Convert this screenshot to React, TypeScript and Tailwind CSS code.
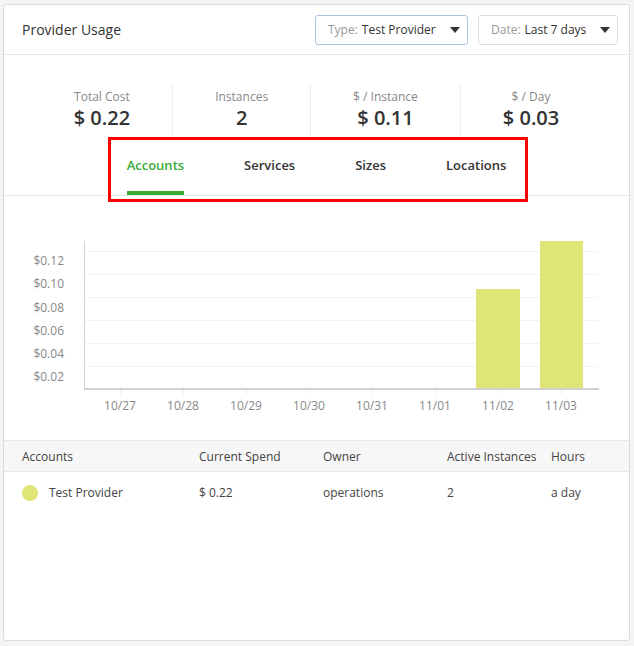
import React from "react";

const stats = [
  { label: "Total Cost", value: "$ 0.22" },
  { label: "Instances", value: "2" },
  { label: "$ / Instance", value: "$ 0.11" },
  { label: "$ / Day", value: "$ 0.03" },
];

const tabs = ["Accounts", "Services", "Sizes", "Locations"];

const yLabels = [
  { t: "$0.12", y: 64 },
  { t: "$0.10", y: 87 },
  { t: "$0.08", y: 111 },
  { t: "$0.06", y: 134 },
  { t: "$0.04", y: 157 },
  { t: "$0.02", y: 180 },
];
const grid = [55, 78, 101, 124, 147, 170];
const xLabels = ["10/27", "10/28", "10/29", "10/30", "10/31", "11/01", "11/02", "11/03"];

function Caret() {
  return (
    <svg width="10" height="6" viewBox="0 0 10 6" className="ml-[14px]">
      <path d="M0 0 L10 0 L5 6 Z" fill="#333" />
    </svg>
  );
}

function Chart() {
  const ox = 80;
  return (
    <svg width="625" height="244" className="block">
      {grid.map((g) => (
        <line key={g} x1={ox} x2={594} y1={g + 0.5} y2={g + 0.5} stroke="#f2f2f2" strokeWidth="1" />
      ))}
      <line x1={ox + 0.5} x2={ox + 0.5} y1={45} y2={193} stroke="#d4d4d4" strokeWidth="1" />
      {xLabels.map((_, i) => (
        <line key={i} x1={116 + i * 63 + 0.5} x2={116 + i * 63 + 0.5} y1={194} y2={198} stroke="#ececec" strokeWidth="1" />
      ))}
      <rect x={472} y={93} width={44} height={99} fill="#dfe576" />
      <rect x={536} y={45} width={43} height={147} fill="#dfe576" />
      <rect x={ox} y={192} width={515} height={2} fill="#d0d0d0" />
      {yLabels.map((l) => (
        <text
          key={l.t}
          x={60}
          y={l.y}
          textAnchor="end"
          dominantBaseline="central"
          fontFamily="'Open Sans', sans-serif"
          fontSize="12"
          fill="#888"
        >
          {l.t}
        </text>
      ))}
      {xLabels.map((l, i) => (
        <text
          key={l}
          x={116 + i * 63}
          y={209}
          textAnchor="middle"
          dominantBaseline="central"
          fontFamily="'Open Sans', sans-serif"
          fontSize="12"
          fill="#888"
        >
          {l}
        </text>
      ))}
    </svg>
  );
}

export default function App() {
  return (
    <div className="min-h-[646px] bg-[#f4f4f4] pl-[3px] pt-[4px]" style={{ fontFamily: "'Open Sans', sans-serif" }}>
      <div className="relative h-[637px] w-[627px] rounded-[3px] border border-[#dcdcdc] bg-white">
        {/* header */}
        <div className="flex h-[50px] items-center justify-between border-b border-[#e8e8e8] pl-[18px] pr-[11px]">
          <div className="text-[14px] text-[#333]">Provider Usage</div>
          <div className="flex gap-[10px]">
            <div className="flex h-[30px] w-[153px] items-center rounded-[3px] border border-[#a9c6e6] pl-[12px] text-[12px]">
              <span className="text-[#999]">Type:</span>
              <span className="ml-[4px] text-[#333]">Test Provider</span>
              <Caret />
            </div>
            <div className="flex h-[30px] w-[140px] items-center rounded-[3px] border border-[#dcdcdc] pl-[12px] text-[12px]">
              <span className="text-[#999]">Date:</span>
              <span className="ml-[4px] text-[#333]">Last 7 days</span>
              <Caret />
            </div>
          </div>
        </div>

        {/* stats */}
        <div className="flex justify-center pt-[30px]">
          {stats.map((s, i) => (
            <div
              key={s.label}
              className={
                "flex h-[50px] flex-col items-center px-[42px] " + (i > 0 ? "border-l border-[#ececec]" : "")
              }
            >
              <div className="mt-[3px] text-[12px] leading-[18px] text-[#888]">{s.label}</div>
              <div className="mt-[-1px] text-[20px] font-semibold leading-[26px] text-[#333]">{s.value}</div>
            </div>
          ))}
        </div>

        {/* tabs */}
        <div className="flex justify-center gap-[60px] border-b border-[#e8e8e8]">
          {tabs.map((t, i) => (
            <div key={t} className="flex flex-col">
              <div
                className={
                  "pt-[21px] pb-[17px] text-[13px] font-semibold leading-[18px] " +
                  (i === 0 ? "text-[#3aaa35]" : "text-[#333]")
                }
              >
                {t}
              </div>
              <div className={"h-[4px] " + (i === 0 ? "bg-[#3aaa35]" : "")} />
            </div>
          ))}
        </div>

        {/* chart */}
        <Chart />

        {/* table */}
        <div className="grid h-[32px] grid-cols-[177px_124px_124px_104px_1fr] items-center border-y border-[#e8e8e8] bg-[#f7f7f7] pl-[18px] text-[12px] text-[#444]">
          <div className="pt-[1px]">Accounts</div>
          <div className="pt-[1px]">Current Spend</div>
          <div className="pt-[1px]">Owner</div>
          <div className="pt-[1px]">Active Instances</div>
          <div className="pt-[1px]">Hours</div>
        </div>
        <div className="grid h-[41px] grid-cols-[177px_124px_124px_104px_1fr] items-center pl-[18px] text-[12px] text-[#444]">
          <div className="flex items-center">
            <span className="h-[16px] w-[16px] rounded-full bg-[#dfe576]" />
            <span className="ml-[11px]">Test Provider</span>
          </div>
          <div>$ 0.22</div>
          <div>operations</div>
          <div>2</div>
          <div>a day</div>
        </div>

        {/* annotation box */}
        <div className="pointer-events-none absolute left-[104px] top-[132px] h-[65px] w-[420px] border-[3px] border-[#ff0000]" />
      </div>
    </div>
  );
}
